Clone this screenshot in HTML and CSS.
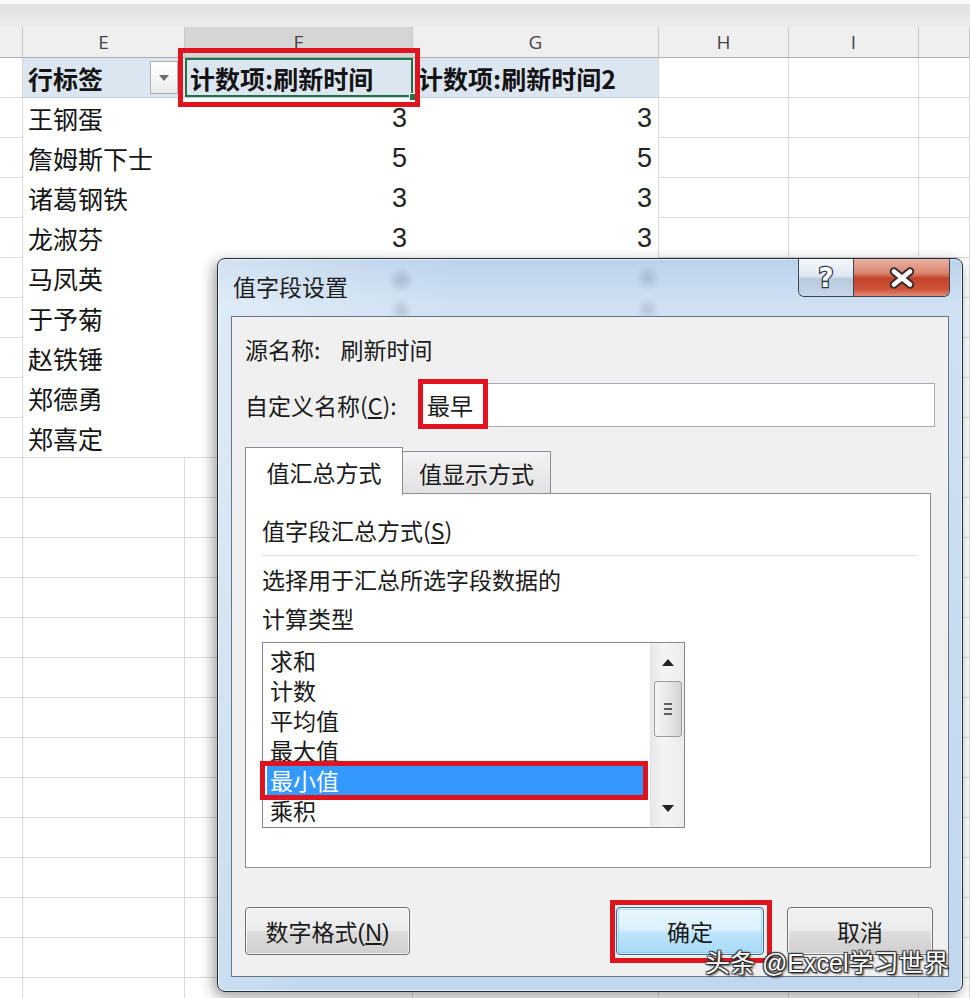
FILE: index.html
```html
<!DOCTYPE html>
<html lang="zh-CN">
<head>
<meta charset="utf-8">
<title>值字段设置</title>
<link rel="stylesheet" href="styles.css">
</head>
<body>
<div class="sheet">
  <div class="topbar"></div>
  <div class="grid">
    <div class="h"></div><div class="h">E</div><div class="h sel">F</div><div class="h">G</div><div class="h">H</div><div class="h">I</div><div class="h"></div>

    <div class="c"></div>
    <div class="p hd"><span>行标签</span><span class="dd"><svg width="10" height="6" viewBox="0 0 10 6"><path d="M0 0 L10 0 L5 6 Z" fill="#6b6b6b"/></svg></span></div>
    <div class="p hd selcell"><span>计数项:刷新时间</span><span class="handle"></span></div>
    <div class="p hd g"><span>计数项:刷新时间2</span></div>
    <div class="c"></div><div class="c"></div><div class="c"></div>

    <div class="c"></div><div class="p name">王钢蛋</div><div class="p num">3</div><div class="p num g">3</div><div class="c"></div><div class="c"></div><div class="c"></div>
    <div class="c"></div><div class="p name">詹姆斯下士</div><div class="p num">5</div><div class="p num g">5</div><div class="c"></div><div class="c"></div><div class="c"></div>
    <div class="c"></div><div class="p name">诸葛钢铁</div><div class="p num">3</div><div class="p num g">3</div><div class="c"></div><div class="c"></div><div class="c"></div>
    <div class="c"></div><div class="p name">龙淑芬</div><div class="p num">3</div><div class="p num g">3</div><div class="c"></div><div class="c"></div><div class="c"></div>
    <div class="c"></div><div class="p name">马凤英</div><div class="p num"></div><div class="p num g"></div><div class="c"></div><div class="c"></div><div class="c"></div>
    <div class="c"></div><div class="p name">于予菊</div><div class="p num"></div><div class="p num g"></div><div class="c"></div><div class="c"></div><div class="c"></div>
    <div class="c"></div><div class="p name">赵铁锤</div><div class="p num"></div><div class="p num g"></div><div class="c"></div><div class="c"></div><div class="c"></div>
    <div class="c"></div><div class="p name">郑德勇</div><div class="p num"></div><div class="p num g"></div><div class="c"></div><div class="c"></div><div class="c"></div>
    <div class="c"></div><div class="p name last">郑喜定</div><div class="p num last"></div><div class="p num g last"></div><div class="c"></div><div class="c"></div><div class="c"></div>

    <div class="c"></div><div class="c"></div><div class="c"></div><div class="c"></div><div class="c"></div><div class="c"></div><div class="c"></div>
    <div class="c"></div><div class="c"></div><div class="c"></div><div class="c"></div><div class="c"></div><div class="c"></div><div class="c"></div>
    <div class="c"></div><div class="c"></div><div class="c"></div><div class="c"></div><div class="c"></div><div class="c"></div><div class="c"></div>
    <div class="c"></div><div class="c"></div><div class="c"></div><div class="c"></div><div class="c"></div><div class="c"></div><div class="c"></div>
    <div class="c"></div><div class="c"></div><div class="c"></div><div class="c"></div><div class="c"></div><div class="c"></div><div class="c"></div>
    <div class="c"></div><div class="c"></div><div class="c"></div><div class="c"></div><div class="c"></div><div class="c"></div><div class="c"></div>
    <div class="c"></div><div class="c"></div><div class="c"></div><div class="c"></div><div class="c"></div><div class="c"></div><div class="c"></div>
    <div class="c"></div><div class="c"></div><div class="c"></div><div class="c"></div><div class="c"></div><div class="c"></div><div class="c"></div>
    <div class="c"></div><div class="c"></div><div class="c"></div><div class="c"></div><div class="c"></div><div class="c"></div><div class="c"></div>
    <div class="c"></div><div class="c"></div><div class="c"></div><div class="c"></div><div class="c"></div><div class="c"></div><div class="c"></div>
    <div class="c"></div><div class="c"></div><div class="c"></div><div class="c"></div><div class="c"></div><div class="c"></div><div class="c"></div>
    <div class="c"></div><div class="c"></div><div class="c"></div><div class="c"></div><div class="c"></div><div class="c"></div><div class="c"></div>
    <div class="c"></div><div class="c"></div><div class="c"></div><div class="c"></div><div class="c"></div><div class="c"></div><div class="c"></div>
    <div class="c"></div><div class="c"></div><div class="c"></div><div class="c"></div><div class="c"></div><div class="c"></div><div class="c"></div>
  </div>

  <div class="mark mark-f"></div>

  <div class="dialog">
    <div class="titlebar">
      <div class="title">值字段设置</div>
      <div class="capbtns">
        <div class="cap help"><span class="q">?</span></div>
        <div class="cap close"><svg width="30" height="24" viewBox="-15 -12 30 24"><path d="M-8 -6.5 L8 6.5 M8 -6.5 L-8 6.5" stroke="#3b2a2a" stroke-width="8.5" stroke-linecap="round" fill="none"/><path d="M-8 -6.5 L8 6.5 M8 -6.5 L-8 6.5" stroke="#ffffff" stroke-width="4.6" stroke-linecap="round" fill="none"/></svg></div>
      </div>
    </div>
    <div class="client">
      <div class="srcrow"><span>源名称:</span><span class="srcval">刷新时间</span></div>
      <div class="customrow">
        <span class="lbl">自定义名称(<u>C</u>):</span>
        <div class="input"><span class="inval">最早</span><span class="mark mark-name"></span></div>
      </div>
      <div class="tabs">
        <div class="tab active">值汇总方式</div>
        <div class="tab">值显示方式</div>
      </div>
      <div class="panel">
        <div class="grp">值字段汇总方式(<u>S</u>)</div>
        <div class="sep"></div>
        <div class="desc">选择用于汇总所选字段数据的<br>计算类型</div>
        <div class="listbox">
          <div class="items">
            <div class="item">求和</div>
            <div class="item">计数</div>
            <div class="item">平均值</div>
            <div class="item">最大值</div>
            <div class="item selected">最小值</div>
            <div class="item">乘积</div>
          </div>
          <div class="vscroll">
            <div class="arrow"><svg width="12" height="7" viewBox="0 0 12 7"><path d="M0 7 L6 0 L12 7 Z" fill="#222"/></svg></div>
            <div class="thumb"><svg width="10" height="14" viewBox="0 0 10 14"><path d="M1 2 H9 M1 7 H9 M1 12 H9" stroke="#333" stroke-width="1.6"/></svg></div>
            <div class="track"></div>
            <div class="arrow"><svg width="12" height="7" viewBox="0 0 12 7"><path d="M0 0 L12 0 L6 7 Z" fill="#222"/></svg></div>
          </div>
          <span class="mark mark-item"></span>
        </div>
      </div>
      <div class="buttons">
        <div class="btn"><span class="btxt">数字格式(<u>N</u>)</span></div>
        <div class="okwrap"><div class="btn default"><span class="btxt">确定</span></div><span class="mark mark-ok"></span></div>
        <div class="btn"><span class="btxt">取消</span></div>
      </div>
    </div>
  </div>

  <div class="watermark">头条 @Excel学习世界</div>
</div>
</body>
</html>
```

FILE: styles.css
```css
* { box-sizing: border-box; }
html, body { margin: 0; padding: 0; }
body {
  width: 970px;
  height: 998px;
  overflow: hidden;
  background: #ffffff;
  font-family: "Noto Sans CJK SC", "Noto Sans", sans-serif;
  color: #1a1a1a;
}
.sheet { position: relative; width: 970px; height: 998px; overflow: hidden; background: #fff; }

/* ---------- spreadsheet ---------- */
.topbar {
  height: 27px;
  border-top: 4px solid #fafafa;
  background: linear-gradient(#e2e2e2, #ececec);
}
.grid {
  display: grid;
  grid-template-columns: 23px 162px 228px 246px 130px 130px 51px;
  grid-template-rows: 31px;
  grid-auto-rows: 40px;
}
.h {
  background: #efefef;
  border-right: 1px solid #c8c8c8;
  border-bottom: 1px solid #acacac;
  display: flex;
  align-items: center;
  justify-content: center;
  font-family: "Open Sans", "Liberation Sans", sans-serif;
  font-size: 19px;
  color: #444;
}
.h.sel { background: #d5d5d5; }
.c { border-right: 1px solid #d9d9d9; border-bottom: 1px solid #d9d9d9; }
.p {
  display: flex;
  align-items: center;
  font-size: 25px;
  color: #141414;
  white-space: nowrap;
  overflow: visible;
}
.p.name { padding-left: 5px; }
.p.num {
  justify-content: flex-end;
  padding-right: 6px;
  font-family: "Liberation Sans", sans-serif;
  font-size: 27px;
  color: #222;
}
.p.g { border-right: 1px solid #d9d9d9; }
.p.last { border-bottom: 1px solid #d9d9d9; }
.p.hd {
  background: #dce6f1;
  border-bottom: 1px solid #b9cde5;
  font-weight: bold;
  padding-left: 5px;
}
.dd {
  margin-left: auto;
  margin-right: 7px;
  width: 28px;
  height: 33px;
  border: 1px solid #aeaeae;
  background: linear-gradient(#ffffff, #ececec);
  display: flex;
  align-items: center;
  justify-content: center;
}
.selcell { position: relative; box-shadow: inset 0 0 0 2px #217346; }
.handle {
  position: absolute;
  right: -4px;
  bottom: -4px;
  width: 8px;
  height: 8px;
  background: #217346;
  border: 1px solid #fff;
}

/* red annotation frames */
.mark { position: absolute; border: 5px solid #e0141e; pointer-events: none; }
.mark-f { left: 178px; top: 48px; width: 242px; height: 59px; }

/* ---------- dialog ---------- */
.dialog {
  position: absolute;
  left: 217px;
  top: 258px;
  width: 746px;
  height: 734px;
  border: 1px solid #22303e;
  border-radius: 8px;
  background:
    linear-gradient(100deg, rgba(255,255,255,0.35) 0%, rgba(255,255,255,0) 28%),
    linear-gradient(180deg, #bad2ea 0%, #cfe1f3 6%, #c6dbf0 60%, #c0d7ee 100%);
  box-shadow: inset 0 0 0 1px rgba(255,255,255,0.55), -3px 4px 14px rgba(0,0,0,0.4);
  display: flex;
  flex-direction: column;
}
.titlebar {
  height: 57px;
  display: flex;
  align-items: flex-start;
  background:
    radial-gradient(circle at 183px 21px, rgba(70,90,110,0.26) 0, rgba(70,90,110,0) 13px),
    radial-gradient(circle at 183px 51px, rgba(70,90,110,0.22) 0, rgba(70,90,110,0) 12px),
    radial-gradient(circle at 430px 19px, rgba(70,90,110,0.22) 0, rgba(70,90,110,0) 13px),
    radial-gradient(circle at 430px 50px, rgba(70,90,110,0.2) 0, rgba(70,90,110,0) 12px);
}
.title {
  padding: 12px 0 0 15px;
  font-size: 23px;
  line-height: 30px;
  color: #1e1e1e;
}
.capbtns {
  margin-left: auto;
  margin-right: 12px;
  display: flex;
  height: 38px;
  border: 1px solid #3a4552;
  border-top: none;
  border-radius: 0 0 6px 6px;
  overflow: hidden;
}
.cap { display: flex; align-items: center; justify-content: center; }
.help {
  width: 55px;
  border-right: 1px solid #3a4552;
  background: linear-gradient(#f3f7fb 0%, #dfe8f2 45%, #b9cadd 55%, #c8d7e8 100%);
}
.q {
  font-family: "DejaVu Sans", sans-serif;
  font-weight: bold;
  font-size: 26px;
  line-height: 1;
  color: #ffffff;
  -webkit-text-stroke: 2.5px #2c3a4c;
  paint-order: stroke fill;
}
.close {
  width: 95px;
  background: linear-gradient(#e9b1a3 0%, #d9866f 38%, #c2432a 52%, #cc553b 82%, #df8a72 100%);
}

.client {
  margin: 0 13px;
  height: 661px;
  border: 1px solid #65778a;
  background: #f0f0f0;
  padding: 0 13px;
  font-size: 23px;
  color: #1a1a1a;
  display: flex;
  flex-direction: column;
}
.srcrow {
  margin-top: 16px;
  height: 32px;
  line-height: 32px;
  display: flex;
}
.srcval { margin-left: 20px; }
.customrow {
  margin-top: 18px;
  height: 44px;
  display: flex;
  align-items: center;
}
.lbl { width: 173px; flex: none; }
.input {
  position: relative;
  flex: 1;
  height: 44px;
  background: #ffffff;
  border: 1px solid #a5acb5;
  display: flex;
  align-items: center;
}
.inval { padding-left: 8px; }
.mark-name { left: -1px; top: -5px; width: 70px; height: 50px; }

.tabs {
  margin-top: 20px;
  height: 46px;
  display: flex;
  align-items: flex-end;
  position: relative;
  z-index: 1;
}
.tab {
  height: 42px;
  width: 148px;
  border: 1px solid #898c95;
  border-left: none;
  border-bottom: none;
  background: linear-gradient(#f3f3f3, #e2e2e2);
  display: flex;
  align-items: center;
  justify-content: center;
}
.tab.active {
  width: 158px;
  height: 48px;
  margin-bottom: -2px;
  border-left: 1px solid #898c95;
  background: #ffffff;
}
.panel {
  margin-right: 4px;
  height: 375px;
  background: #ffffff;
  border: 1px solid #898c95;
  padding: 20px 14px 0 16px;
  display: flex;
  flex-direction: column;
}
.grp { height: 32px; line-height: 32px; }
.sep { margin-top: 9px; height: 1px; background: #d7dde3; }
.desc { margin-top: 4px; line-height: 39px; }
.listbox {
  position: relative;
  margin-top: 4px;
  width: 423px;
  height: 186px;
  border: 1px solid #828790;
  background: #ffffff;
  display: flex;
  overflow: visible;
}
.items {
  flex: 1;
  padding: 2px 6px 0 4px;
  overflow: hidden;
  font-family: "Liberation Sans", "Noto Sans CJK SC", sans-serif;
}
.item {
  height: 30px;
  line-height: 30px;
  padding: 2px 0 0 3px;
  white-space: nowrap;
}
.item.selected { background: #3399ff; color: #ffffff; }
.vscroll {
  width: 34px;
  background: linear-gradient(90deg, #e9e9e9, #f5f5f5 40%, #ececec);
  border-left: 1px solid #e3e3e3;
  display: flex;
  flex-direction: column;
  align-items: center;
}
.arrow { height: 38px; width: 100%; display: flex; align-items: center; justify-content: center; }
.thumb {
  width: 28px;
  height: 56px;
  border: 1px solid #9c9c9c;
  border-radius: 3px;
  background: linear-gradient(90deg, #f6f6f6, #e8e8e8 50%, #d4d4d4);
  display: flex;
  align-items: center;
  justify-content: center;
}
.track { flex: 1; }
.mark-item { left: -3px; top: 118px; width: 388px; height: 39px; }

.buttons {
  margin-top: 39px;
  margin-right: 2px;
  display: flex;
  align-items: center;
}
.btn {
  height: 48px;
  width: 146px;
  border: 1px solid #707070;
  border-radius: 4px;
  background: linear-gradient(#f2f2f2 0%, #ebebeb 48%, #dddddd 52%, #cfcfcf 100%);
  box-shadow: inset 0 0 0 1px rgba(255,255,255,0.75);
  display: flex;
  align-items: center;
  justify-content: center;
  color: #1a1a1a;
}
.btxt {
  font-family: "Liberation Sans", "Noto Sans CJK SC", sans-serif;
  line-height: 26px;
  padding-top: 3px;
}
.buttons > .btn:first-child { width: 165px; }
.okwrap { position: relative; margin-left: auto; margin-right: 23px; }
.btn.default {
  width: 148px;
  border-color: #3c6f96;
  background: linear-gradient(#eaf6fd 0%, #d9f0fc 48%, #bee6fd 52%, #a7d9f5 100%);
  box-shadow: inset 0 0 0 1px rgba(255,255,255,0.6), inset 0 0 0 2px rgba(120,190,235,0.5);
}
.mark-ok { left: -6px; top: -7px; right: -8px; bottom: -8px; }

.watermark {
  position: absolute;
  left: 705px;
  top: 949px;
  font-family: "Liberation Sans", "Noto Sans CJK SC", sans-serif;
  font-size: 25px;
  line-height: 28px;
  color: #ffffff;
  white-space: nowrap;
  text-shadow: 1px 1px 1px #222, -1px -1px 1px #333, 1px -1px 1px #333, -1px 1px 1px #333, 2px 2px 2px rgba(0,0,0,0.6);
}
```
